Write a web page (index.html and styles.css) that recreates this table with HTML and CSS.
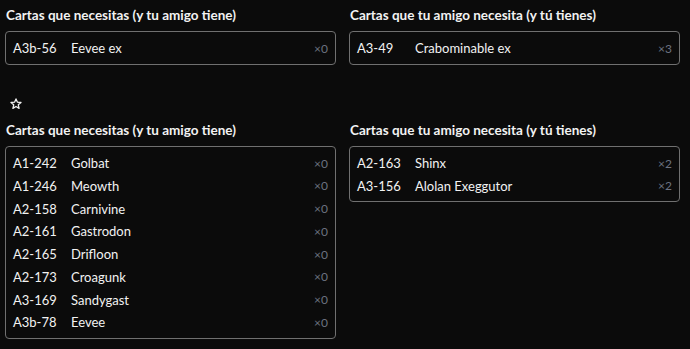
FILE: index.html
```html
<!DOCTYPE html>
<html lang="es">
<head>
<meta charset="utf-8">
<link rel="stylesheet" href="styles.css">
</head>
<body>
<div class="page">
  <div class="grid">
    <section>
      <h3 class="title">Cartas que necesitas (y tu amigo tiene)</h3>
      <div class="box">
        <div class="row"><span class="code">A3b-56</span><span class="name">Eevee ex</span><span class="qty">×0</span></div>
      </div>
    </section>
    <section>
      <h3 class="title">Cartas que tu amigo necesita (y tú tienes)</h3>
      <div class="box">
        <div class="row"><span class="code">A3-49</span><span class="name">Crabominable ex</span><span class="qty">×3</span></div>
      </div>
    </section>
  </div>
  <div class="star"><svg width="12" height="11" viewBox="0 0 24 22"><path d="M12 1.8l2.9 6.6 7.1.6-5.4 4.7 1.6 7-6.2-3.7-6.2 3.7 1.6-7L2 9l7.1-.6z" fill="none" stroke="#f2f2f2" stroke-width="2.6" stroke-linejoin="round"/></svg></div>
  <div class="grid">
    <section>
      <h3 class="title">Cartas que necesitas (y tu amigo tiene)</h3>
      <div class="box">
        <div class="row"><span class="code">A1-242</span><span class="name">Golbat</span><span class="qty">×0</span></div>
        <div class="row"><span class="code">A1-246</span><span class="name">Meowth</span><span class="qty">×0</span></div>
        <div class="row"><span class="code">A2-158</span><span class="name">Carnivine</span><span class="qty">×0</span></div>
        <div class="row"><span class="code">A2-161</span><span class="name">Gastrodon</span><span class="qty">×0</span></div>
        <div class="row"><span class="code">A2-165</span><span class="name">Drifloon</span><span class="qty">×0</span></div>
        <div class="row"><span class="code">A2-173</span><span class="name">Croagunk</span><span class="qty">×0</span></div>
        <div class="row"><span class="code">A3-169</span><span class="name">Sandygast</span><span class="qty">×0</span></div>
        <div class="row"><span class="code">A3b-78</span><span class="name">Eevee</span><span class="qty">×0</span></div>
      </div>
    </section>
    <section>
      <h3 class="title">Cartas que tu amigo necesita (y tú tienes)</h3>
      <div class="box">
        <div class="row"><span class="code">A2-163</span><span class="name">Shinx</span><span class="qty">×2</span></div>
        <div class="row"><span class="code">A3-156</span><span class="name">Alolan Exeggutor</span><span class="qty">×2</span></div>
      </div>
    </section>
  </div>
</div>
</body>
</html>
```
FILE: styles.css
```css
html, body {
  margin: 0;
  background: #0b0b0b;
  color: #f2f2f2;
  font-family: "Lato", "Noto Sans", sans-serif;
  font-size: 13px;
}
.page {
  padding: 6px 10px 0 5px;
}
.grid {
  display: grid;
  grid-template-columns: 1fr 1fr;
  column-gap: 13px;
  align-items: start;
}
.title {
  margin: 0 0 7px 1px;
  font-size: 13.5px;
  font-weight: 700;
  line-height: 18px;
}
.box {
  border: 1px solid #707070;
  border-radius: 4px;
  padding: 5px 7px 4px;
}
.row {
  display: flex;
  align-items: center;
  height: 22.75px;
}
.code {
  width: 58px;
  flex: none;
}
.name {
  flex: 1;
}
.qty {
  color: #6b7280;
  font-size: 12px;
}
.star {
  display: flex;
  height: 11px;
  margin: 33px 0 12px 5px;
}
```
